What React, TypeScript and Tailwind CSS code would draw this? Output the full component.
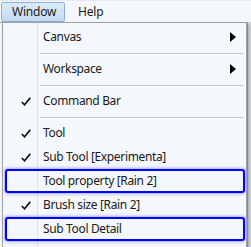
import React from "react";

const Check = () => (
  <svg width="10" height="9" viewBox="0 0 10 9" className="block">
    <path d="M0.8 5 L3.6 7.8 L9.2 0.8" fill="none" stroke="#111" strokeWidth="1.7" />
  </svg>
);

const Arrow = () => (
  <svg width="6" height="10" viewBox="0 0 6 10" className="block">
    <path d="M0 0 L6 5 L0 10 Z" fill="#000" />
  </svg>
);

type ItemProps = { label: string; checked?: boolean; sub?: boolean; hl?: boolean };

const Item = ({ label, checked, sub, hl }: ItemProps) => (
  <div
    className={
      "relative flex items-center h-[24px] ml-[2px] mr-[1px] " +
      (hl
        ? "border-2 border-[#0000ff] rounded-[3px] shadow-[0_0_3px_1px_#a8a8ff]"
        : "border-2 border-transparent")
    }
  >
    <div className="w-[36px] flex items-center justify-center pl-[1px]">{checked ? <Check /> : null}</div>
    <div className="flex-1 text-[12px] tracking-[-0.35px] leading-none text-[#1a1a1a] whitespace-nowrap">
      {label}
    </div>
    {sub ? (
      <div className="pr-[7px]">
        <Arrow />
      </div>
    ) : null}
  </div>
);

const Sep = () => (
  <div className="h-[8px] flex flex-col pt-[4px] pl-[37px] pr-[3px]">
    <div className="h-px bg-[#c4c4c4]" />
    <div className="h-px bg-white" />
  </div>
);

export default function App() {
  return (
    <div
      className="relative w-[251px] h-[247px] overflow-hidden bg-[#f4f7fb]"
      style={{ fontFamily: '"Noto Sans", "Open Sans", sans-serif' }}
    >
      <div className="flex items-start h-[22px] pt-[1px] pl-[1px] border-t border-[#e6eaf0]">
        <div className="w-[64px] h-[20px] pl-[10px] flex items-center text-[12px] tracking-[-0.2px] text-[#1a1a1a] border border-[#8eb0d2] rounded-[2px] bg-gradient-to-b from-[#dcebf8] to-[#c3dbf1]">
          Window
        </div>
        <div className="h-[20px] pl-[13px] flex items-center text-[12px] tracking-[-0.2px] text-[#1a1a1a]">
          Help
        </div>
      </div>
      <div className="absolute right-0 top-[22px] bottom-0 w-[4px] bg-[#d6d9de] border-l border-[#a8acb2]" />
      <div className="absolute left-0 top-[22px] w-[2px] h-px bg-[#a0a0a0]" />
      <div className="absolute left-[2px] top-[22px] w-[245px] h-[240px] border border-[#a0a0a0] bg-[#f4f7fb] pt-[2px] shadow-[2px_2px_3px_rgba(0,0,0,0.25)]">
        <div className="absolute left-[34px] top-0 bottom-0 w-px bg-[#dde1e6]" />
        <Item label="Canvas" sub />
        <Sep />
        <Item label="Workspace" sub />
        <Sep />
        <Item label="Command Bar" checked />
        <Sep />
        <Item label="Tool" checked />
        <Item label="Sub Tool [Experimenta]" checked />
        <Item label="Tool property [Rain 2]" hl />
        <Item label="Brush size [Rain 2]" checked />
        <Item label="Sub Tool Detail" hl />
      </div>
    </div>
  );
}
